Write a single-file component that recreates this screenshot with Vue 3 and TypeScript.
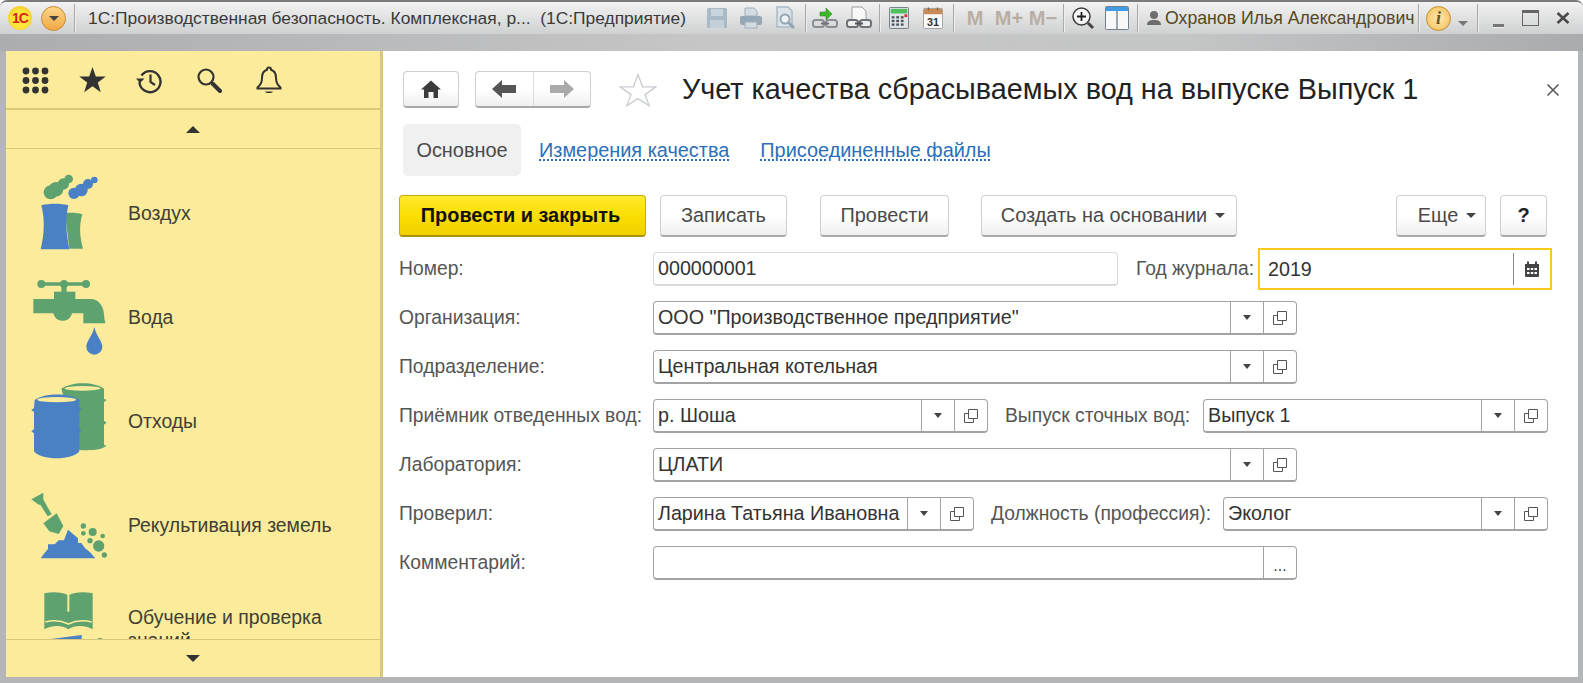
<script setup lang="ts">
// 1C document form: title bar, yellow section panel, and the form itself.
interface FieldDef {
  value: string
  width: number
  actions: 'select' | 'more'
}
interface RowDef {
  label: string
  field: FieldDef
  label2?: string
  field2?: FieldDef
}

const sections = [
  { icon: 'air', label: 'Воздух' },
  { icon: 'water', label: 'Вода' },
  { icon: 'waste', label: 'Отходы' },
  { icon: 'land', label: 'Рекультивация земель' },
  { icon: 'book', label: 'Обучение и проверка знаний' },
]

const rows: RowDef[] = [
  { label: 'Организация:', field: { value: 'ООО "Производственное предприятие"', width: 644, actions: 'select' } },
  { label: 'Подразделение:', field: { value: 'Центральная котельная', width: 644, actions: 'select' } },
  {
    label: 'Приёмник отведенных вод:',
    field: { value: 'р. Шоша', width: 335, actions: 'select' },
    label2: 'Выпуск сточных вод:',
    field2: { value: 'Выпуск 1', width: 345, actions: 'select' },
  },
  { label: 'Лаборатория:', field: { value: 'ЦЛАТИ', width: 644, actions: 'select' } },
  {
    label: 'Проверил:',
    field: { value: 'Ларина Татьяна Ивановна', width: 321, actions: 'select' },
    label2: 'Должность (профессия):',
    field2: { value: 'Эколог', width: 325, actions: 'select' },
  },
  { label: 'Комментарий:', field: { value: '', width: 644, actions: 'more' } },
]
</script>

<template>
  <div class="window">
    <header class="titlebar">
      <div class="strip">
        <span class="logo">1С</span>
        <button class="menu-round"><i class="tri"></i></button>
        <span class="sep first"></span>
        <span class="app-title">1С:Производственная безопасность. Комплексная, р...&nbsp; (1С:Предприятие)</span>

        <div class="tb-group first-group">
          <span class="slot">
            <svg viewBox="0 0 24 24" width="24" height="24"><path d="M2 3.5A1.5 1.5 0 0 1 3.500 2h17A1.500 1.500 0 0 1 22 3.500v17a1.500 1.500 0 0 1-1.500 1.500h-17A1.500 1.500 0 0 1 2 20.500z" fill="#a9bac7"/><rect x="6" y="3" width="12" height="7" fill="#c9d5dd"/><rect x="5" y="14" width="14" height="8" fill="#c3d0d9"/></svg>
          </span>
          <span class="slot">
            <svg viewBox="0 0 24 24" width="24" height="24"><path d="M6 2h9l3 3v5H6z" fill="#d3dbe1" stroke="#9fb0bd"/><rect x="1" y="10" width="22" height="9" rx="2" fill="#96a7b5"/><rect x="6" y="16" width="12" height="6" fill="#d3dbe1" stroke="#9fb0bd"/></svg>
          </span>
          <span class="slot">
            <svg viewBox="0 0 24 24" width="24" height="24"><path d="M4 1h11l4 4v16H4z" fill="#dde4e9" stroke="#a9bac7" stroke-width="1.500"/><circle cx="12" cy="13" r="4.500" fill="#eef2f5" stroke="#93a5b3" stroke-width="2"/><path d="M15.500 16.500 21 22" stroke="#93a5b3" stroke-width="3"/></svg>
          </span>
        </div>
        <span class="sep"></span>
        <div class="tb-group">
          <span class="slot">
            <svg viewBox="0 0 26 24" width="26" height="24"><path d="M8 6h6V2l6 6-6 6v-4H8z" fill="#3fb52e" stroke="#2d8a20" stroke-width=".6"/><rect x="1" y="14" width="11" height="7" rx="2.500" fill="none" stroke="#8b8f93" stroke-width="2"/><rect x="14" y="14" width="11" height="7" rx="2.500" fill="none" stroke="#8b8f93" stroke-width="2"/><path d="M9 17.500h8" stroke="#6f7377" stroke-width="2"/></svg>
          </span>
          <span class="slot">
            <svg viewBox="0 0 26 24" width="26" height="24"><path d="M6 1h10l4 4v10H6z" fill="#f8f8f8" stroke="#9a9da0"/><rect x="1" y="14" width="11" height="7" rx="2.500" fill="#eee" stroke="#6e7175" stroke-width="2"/><rect x="14" y="14" width="11" height="7" rx="2.500" fill="#eee" stroke="#6e7175" stroke-width="2"/><path d="M9 17.500h8" stroke="#55585c" stroke-width="2"/></svg>
          </span>
        </div>
        <span class="sep"></span>
        <div class="tb-group">
          <span class="slot">
            <svg viewBox="0 0 22 24" width="20" height="22"><rect x=".5" y=".5" width="21" height="23" rx="1" fill="#dfe3e6" stroke="#68737c"/><rect x="2" y="2" width="18" height="5" fill="#4cc05a"/><g fill="#4a5158"><rect x="3" y="10" width="3" height="2.500"/><rect x="8" y="10" width="3" height="2.500"/><rect x="13" y="10" width="3" height="2.500"/><rect x="3" y="14" width="3" height="2.500"/><rect x="8" y="14" width="3" height="2.500"/><rect x="13" y="14" width="3" height="2.500"/><rect x="3" y="18" width="3" height="2.500"/><rect x="8" y="18" width="3" height="2.500"/><rect x="13" y="18" width="3" height="2.500"/></g><rect x="17" y="8" width="3" height="3" fill="#e8232b"/></svg>
          </span>
          <span class="slot">
            <svg viewBox="0 0 22 24" width="20" height="22"><rect x=".5" y="1.500" width="21" height="22" rx="1" fill="#fafafa" stroke="#9a9a9a"/><path d="M1 2h20v6H1z" fill="#c98a55"/><path d="M6 .5v3M16 .5v3" stroke="#8d5b30" stroke-width="1.500"/><text x="11" y="21" text-anchor="middle" class="cal-num">31</text></svg>
          </span>
        </div>
        <span class="sep"></span>
        <div class="tb-group mem">
          <span class="slot">M</span>
          <span class="slot">M+</span>
          <span class="slot">M−</span>
        </div>
        <span class="sep"></span>
        <div class="tb-group">
          <span class="slot">
            <svg viewBox="0 0 24 24" width="24" height="24"><circle cx="10.500" cy="10.500" r="8.500" fill="#f5f5f5" stroke="#3c3c3c" stroke-width="1.500"/><path d="M6 10.500h9M10.500 6v9" stroke="#222" stroke-width="1.800"/><path d="M17 17l5 5" stroke="#444" stroke-width="3"/></svg>
          </span>
          <span class="slot">
            <svg viewBox="0 0 24 24" width="24" height="24"><rect x=".5" y=".5" width="23" height="23" rx="1" fill="#f8f8f8" stroke="#6f8090"/><path d="M1 1h22v4H1z" fill="#3e9be6"/><path d="M12 5v18" stroke="#7c8b98" stroke-width="1.500"/></svg>
          </span>
        </div>
        <span class="sep"></span>
        <svg class="user-icon" viewBox="0 0 16 16" width="16" height="16"><circle cx="8" cy="5" r="4" fill="#6d6d6d"/><path d="M1 15c0-4 3-5 7-5s7 1 7 5z" fill="#6d6d6d"/></svg>
        <span class="user-name">Охранов Илья Александрович</span>
        <span class="sep"></span>
        <span class="info">i</span>
        <i class="tri info-arrow"></i>
        <span class="sep"></span>
        <div class="win-btns">
          <span class="win-min"></span>
          <span class="win-max"></span>
          <svg class="win-close" viewBox="0 0 14 12" width="14" height="12"><path d="M1.500 1 12.500 11M12.500 1 1.500 11" stroke="#4a4a4a" stroke-width="2.600"/></svg>
        </div>
      </div>
      <div class="under-strip"></div>
    </header>

    <div class="body">
      <aside class="sidebar">
        <div class="side-tools">
          <svg viewBox="0 0 27 27" width="27" height="27" class="t-grid">
            <g fill="#333">
              <circle cx="4" cy="4" r="3.400"/><circle cx="13.500" cy="4" r="3.400"/><circle cx="23" cy="4" r="3.400"/>
              <circle cx="4" cy="13.500" r="3.400"/><circle cx="13.500" cy="13.500" r="3.400"/><circle cx="23" cy="13.500" r="3.400"/>
              <circle cx="4" cy="23" r="3.400"/><circle cx="13.500" cy="23" r="3.400"/><circle cx="23" cy="23" r="3.400"/>
            </g>
          </svg>
          <svg viewBox="0 0 27 26" width="27" height="26" class="t-star"><path d="M13.500 0l3.300 9.400h10l-8 6 3 9.800-8.300-5.900-8.300 5.900 3-9.800-8-6h10z" fill="#333"/></svg>
          <svg viewBox="0 0 27 27" width="27" height="27" class="t-hist"><path d="M5.500 8.500A10.500 10.500 0 1 1 3.500 15" fill="none" stroke="#333" stroke-width="2.400"/><path d="M0 11.500l4 4.500 4.500-4.500z" fill="#333"/><path d="M14.500 7.500v7.500l4.500 3" fill="none" stroke="#333" stroke-width="2.200"/></svg>
          <svg viewBox="0 0 26 25" width="26" height="25" class="t-search"><circle cx="9" cy="9" r="7.500" fill="none" stroke="#333" stroke-width="2.200"/><path d="M15.500 15.500l7.500 7.500" stroke="#333" stroke-width="4" stroke-linecap="round"/></svg>
          <svg viewBox="0 0 26 28" width="26" height="28" class="t-bell"><path d="M13 1.500c1.500 0 2 1 2 2.300 3.500 1 5 4.500 5 8.200 0 4 1.500 7 4.500 9.500v1H1.500v-1C4.500 19 6 16 6 12c0-3.700 1.500-7.200 5-8.200 0-1.300.500-2.300 2-2.300z" fill="none" stroke="#333" stroke-width="2"/><path d="M9 25.500c1 2 7 2 8 0z" fill="#333"/></svg>
        </div>
        <div class="scroll-btn"><i class="arrow up"></i></div>
        <div class="side-list">
          <div v-for="s in sections" :key="s.icon" class="side-item">
            <svg v-if="s.icon === 'air'" class="side-icon" viewBox="90 69 240 240">
              <g fill="#5ea36f"><circle cx="152" cy="127" r="21"/><circle cx="168" cy="118" r="22"/><circle cx="190" cy="102" r="17"/><circle cx="206" cy="87" r="13"/></g>
              <g fill="#4a80c4"><circle cx="222" cy="130" r="17"/><circle cx="244" cy="120" r="19"/><circle cx="264" cy="102" r="15"/><circle cx="283" cy="90" r="10"/></g>
              <path d="M195 190c18-3 38-1 52 3-10 34-8 66 2 103h-41z" fill="#5ea36f"/>
              <path d="M124 166c25-6 58-6 81 0-10 44-6 84 3 132h-86c11-46 13-88 2-132z" fill="#4a80c4"/>
            </svg>
            <svg v-else-if="s.icon === 'water'" class="side-icon" viewBox="90 381 240 240">
              <g fill="#5ea36f">
                <path d="M124 402h134" stroke="#5ea36f" stroke-width="11"/>
                <circle cx="124" cy="402" r="12"/><circle cx="192" cy="402" r="12"/><circle cx="258" cy="402" r="12"/>
                <rect x="184" y="402" width="16" height="28"/>
                <rect x="162" y="425" width="64" height="22"/>
                <path d="M100 447h170c28 0 43 22 43 58l3 15h-66v-30h-34c-6 30-50 30-56 0h-60z"/>
              </g>
              <path d="M283 530c-5 28-24 42-24 60a24 24 0 0 0 48 0c0-18-19-32-24-60z" fill="#4a80c4"/>
            </svg>
            <svg v-else-if="s.icon === 'waste'" class="side-icon" viewBox="90 693 240 240">
              <path d="M184 716c30-22 100-22 128 0v30l8 4-8 6v56l8 6-8 6v60l8 4-8 4c-10 8-40 10-74 8z" fill="#5ea36f"/>
              <ellipse cx="248" cy="715" rx="54" ry="7" fill="#fbeb9b"/>
              <path d="M104 750c30-22 106-22 134 0v22l6 6-6 6v52l6 6-6 6v56c-20 28-116 28-136 0v-54l-8-6 8-6v-52l-8-6 8-6z" fill="#4a80c4"/>
              <ellipse cx="170" cy="749" rx="58" ry="8" fill="#fbeb9b"/>
            </svg>
            <svg v-else-if="s.icon === 'land'" class="side-icon" viewBox="90 195 240 240">
              <g fill="#5ea36f">
                <path d="M94 238l36-20v34l-14 2z"/>
                <path d="M115 245l14-8 26 46-12 6z"/>
                <path d="M130 310l40-30 20 38-14 24-28-8z"/>
                <circle cx="250" cy="318" r="8"/><circle cx="278" cy="336" r="12"/><circle cx="250" cy="340" r="7"/><circle cx="308" cy="348" r="7"/><circle cx="270" cy="362" r="8"/><circle cx="296" cy="378" r="17"/><circle cx="313" cy="405" r="8"/>
              </g>
              <path d="M122 415c8-12 16-22 22-28v-14h20l12-12h16l12-32 30 26v14h10l10 14 16 14 16 18z" fill="#4a80c4"/>
            </svg>
            <svg v-else class="side-icon" viewBox="90 507 240 240">
              <path d="M133 520c28-6 55-3 69 5v50h6v-50c14-8 42-11 70-5v108c-26-13-52-13-73 0-21-13-46-13-72 0z" fill="#5ea36f"/>
              <path d="M136 606c22-6 48-4 69 6 21-10 47-12 70-6" fill="none" stroke="#fbeb9b" stroke-width="5"/>
              <path d="M130 660l115-15v30H130z" fill="#4a80c4"/>
              <circle cx="300" cy="668" r="14" fill="#5ea36f"/>
            </svg>
            <span class="side-label">{{ s.label }}</span>
          </div>
        </div>
        <div class="scroll-btn bottom"><i class="arrow down"></i></div>
      </aside>

      <main class="form">
        <div class="head">
          <button class="btn home">
            <svg viewBox="0 0 20 18" width="20" height="18"><path d="M10 .5 20 9.500h-3V18h-4.500v-6h-5v6H3V9.500H0z" fill="#3c3c3c"/></svg>
          </button>
          <div class="btn nav">
            <span class="nav-part">
              <svg viewBox="0 0 24 18" width="24" height="18"><path d="M0 9 10 0v5h14v8H10v5z" fill="#555"/></svg>
            </span>
            <span class="nav-part">
              <svg viewBox="0 0 24 18" width="24" height="18"><path d="M24 9 14 0v5H0v8h14v5z" fill="#aaa"/></svg>
            </span>
          </div>
          <svg class="fav" viewBox="0 0 38 34" width="38" height="34"><path d="M19 1.500l4.600 12.300h13.400L26 21.600l4.100 11-11.100-7-11.100 7 4.100-11L1 13.800h13.400z" fill="#fff" stroke="#c8ccd2" stroke-width="1.300"/></svg>
          <h1 class="title">Учет качества сбрасываемых вод на выпуске Выпуск 1</h1>
          <svg class="close" viewBox="0 0 14 14" width="14" height="14"><path d="M1.500 1.500l11 11M12.500 1.500l-11 11" stroke="#555" stroke-width="1.500"/></svg>
        </div>

        <nav class="tabs">
          <span class="tab active">Основное</span>
          <a class="tab link">Измерения качества</a>
          <a class="tab link second">Присоединенные файлы</a>
        </nav>

        <div class="commands">
          <button class="btn cmd primary">Провести и закрыть</button>
          <button class="btn cmd save">Записать</button>
          <button class="btn cmd post">Провести</button>
          <button class="btn cmd create">Создать на основании <i class="tri"></i></button>
          <button class="btn cmd more">Еще <i class="tri"></i></button>
          <button class="btn cmd help">?</button>
        </div>

        <div class="fields">
          <div class="row">
            <label class="lbl">Номер:</label>
            <div class="field plain">000000001</div>
            <label class="lbl2 year-lbl">Год журнала:</label>
            <div class="field focused">
              <span class="value">2019</span>
              <span class="cal-btn">
                <svg viewBox="0 0 16 16" width="16" height="16"><path d="M1 3h14v12a1 1 0 0 1-1 1H2a1 1 0 0 1-1-1z" fill="#444"/><path d="M4 .5v4M12 .5v4" stroke="#444" stroke-width="2"/><g fill="#fff"><rect x="3" y="7" width="2.500" height="2"/><rect x="6.800" y="7" width="2.500" height="2"/><rect x="10.500" y="7" width="2.500" height="2"/><rect x="3" y="11" width="2.500" height="2"/><rect x="6.800" y="11" width="2.500" height="2"/><rect x="10.500" y="11" width="2.500" height="2"/></g></svg>
              </span>
            </div>
          </div>

          <div v-for="r in rows" :key="r.label" class="row">
            <label class="lbl">{{ r.label }}</label>
            <div class="field" :style="{ width: r.field.width + 'px' }">
              <span class="value">{{ r.field.value }}</span>
              <template v-if="r.field.actions === 'select'">
                <span class="fbtn"><i class="tri small"></i></span>
                <span class="fbtn">
                  <svg viewBox="0 0 16 16" width="16" height="16"><path d="M5.500 1.500h9v9h-9z" fill="none" stroke="#555"/><path d="M5.500 5.500h-4v9h9v-4" fill="none" stroke="#555"/></svg>
                </span>
              </template>
              <span v-else class="fbtn dots">...</span>
            </div>
            <template v-if="r.field2">
              <label class="lbl2">{{ r.label2 }}</label>
              <div class="field" :style="{ width: r.field2.width + 'px' }">
                <span class="value">{{ r.field2.value }}</span>
                <span class="fbtn"><i class="tri small"></i></span>
                <span class="fbtn">
                  <svg viewBox="0 0 16 16" width="16" height="16"><path d="M5.500 1.500h9v9h-9z" fill="none" stroke="#555"/><path d="M5.500 5.500h-4v9h9v-4" fill="none" stroke="#555"/></svg>
                </span>
              </div>
            </template>
          </div>
        </div>
      </main>
    </div>
  </div>
</template>

<style>
html, body { margin: 0; padding: 0; overflow: hidden; background: #fff; }
</style>

<style scoped>
.window {
  width: 1583px;
  height: 683px;
  box-sizing: border-box;
  display: flex;
  flex-direction: column;
  padding: 0 5px 6px 6px;
  background: #b4b5b7;
  border-top: 2px solid #7b7b7b;
  border-radius: 7px 7px 0 0;
  font-family: "Liberation Sans", Arial, sans-serif;
  color: #444;
  overflow: hidden;
}
i { display: inline-block; font-style: normal; }
button { font-family: inherit; padding: 0; }

.titlebar { margin: 0 -5px 0 -6px; flex: none; }
.strip {
  height: 32px;
  display: flex;
  align-items: center;
  padding-left: 8px;
  background: linear-gradient(#f2f2f2, #cfd0d1);
}
.under-strip {
  height: 17px;
  background: linear-gradient(90deg, #abadb0 0, #c6c6c6 45%, #c4c5c5 75%, #a9abae 100%);
}
.logo {
  width: 24px;
  height: 24px;
  border-radius: 50%;
  background: radial-gradient(circle at 50% 55%, #ffe63d 45%, #f2b31c);
  color: #d2231c;
  font-weight: 700;
  font-size: 14px;
  line-height: 24px;
  text-align: center;
  letter-spacing: -1px;
}
.menu-round {
  width: 25px;
  height: 25px;
  margin-left: 9px;
  border: 1px solid #c98a32;
  border-radius: 50%;
  background: linear-gradient(#fbd58a, #f1a944);
  display: flex;
  align-items: center;
  justify-content: center;
}
.tri {
  width: 0;
  height: 0;
  border-left: 5px solid transparent;
  border-right: 5px solid transparent;
  border-top: 5px solid #444;
}
.tri.small { border-left-width: 4px; border-right-width: 4px; border-top-width: 5px; }
.sep {
  width: 1px;
  height: 28px;
  margin: 0 2px 0 3px;
  background: #a9a9a9;
  box-shadow: 1px 0 0 #eee;
  flex: none;
}
.sep.first { margin-left: 8px; margin-right: 13px; }
.app-title {
  width: 597px;
  font-size: 17.400px;
  white-space: nowrap;
  color: #3a3a3a;
}
.tb-group { display: flex; }
.first-group { margin-left: 15px; }
.slot {
  width: 34px;
  height: 28px;
  display: flex;
  align-items: center;
  justify-content: center;
}
.cal-num { font: 700 12px "Liberation Sans", Arial, sans-serif; fill: #333; }
.mem { color: #b9aea4; font-weight: 700; font-size: 20px; margin-left: 2px; }
.user-icon { margin-left: 6px; }
.user-name {
  margin-left: 3px;
  width: 250px;
  font-size: 17.700px;
  white-space: nowrap;
  color: #55491f;
}
.info {
  width: 23px;
  height: 23px;
  margin-left: 5px;
  border: 1px solid #c58f2a;
  border-radius: 50%;
  background: radial-gradient(circle, #fde9b0, #f2bd52);
  color: #6b5420;
  font: italic 700 18px/23px "Liberation Serif", serif;
  text-align: center;
}
.info-arrow {
  margin: 10px 6px 0 7px;
  border-top-color: #777;
}
.win-btns { display: flex; align-items: center; margin-left: 13px; }
.win-min { width: 11px; height: 3px; margin-top: 14px; background: #777; box-shadow: 0 1px 0 #eee; }
.win-max { width: 15px; height: 12px; margin-left: 18px; border: 1px solid #666; border-top-width: 3px; }
.win-close { margin-left: 17px; }

.body { flex: 1; display: flex; min-height: 0; }

.sidebar {
  width: 374px;
  flex: none;
  display: flex;
  flex-direction: column;
  background: #fbeb9b;
  border-right: 3px solid #d9c87d;
  box-sizing: content-box;
  color: #3f3f35;
}
.side-tools {
  height: 59px;
  flex: none;
  box-sizing: border-box;
  border-bottom: 2px solid #d8c77c;
  display: flex;
  align-items: center;
  padding: 1px 0 0 16px;
}
.t-star { margin-left: 30px; }
.t-hist { margin-left: 30px; }
.t-search { margin-left: 34px; }
.t-bell { margin-left: 33px; }
.scroll-btn {
  height: 38px;
  flex: none;
  display: flex;
  align-items: center;
  justify-content: center;
  border-bottom: 1px solid #d8c77c;
}
.scroll-btn.bottom {
  border-bottom: none;
  border-top: 1px solid #d8c77c;
  height: 37px;
}
.arrow { width: 0; height: 0; border-left: 7px solid transparent; border-right: 7px solid transparent; }
.arrow.up { border-bottom: 7px solid #333; }
.arrow.down { border-top: 7px solid #333; }
.side-list { flex: 1; overflow: hidden; padding-top: 12px; min-height: 0; }
.side-item {
  height: 104px;
  display: flex;
  align-items: center;
}
.side-icon { width: 80px; height: 80px; margin-left: 24px; flex: none; overflow: visible; }
.side-label {
  margin-left: 18px;
  width: 225px;
  font-size: 19.400px;
  line-height: 23px;
}

.form {
  flex: 1;
  min-width: 0;
  background: #fff;
  padding: 20px 30px 0 16px;
  display: flex;
  flex-direction: column;
}
.head { display: flex; align-items: center; height: 37px; padding-left: 4px; }
.btn {
  box-sizing: border-box;
  border: 1px solid #cfcfcf;
  border-bottom: 2px solid #a8a8a8;
  border-radius: 4px;
  background: linear-gradient(#fff, #fff 50%, #efefef);
  color: #4a4a4a;
  display: flex;
  align-items: center;
  justify-content: center;
}
.home { width: 56px; height: 37px; }
.nav { width: 116px; height: 37px; margin-left: 16px; }
.nav-part { flex: 1; height: 100%; display: flex; align-items: center; justify-content: center; }
.nav-part + .nav-part { border-left: 1px solid #dcdcdc; }
.fav { margin-left: 28px; }
.title {
  margin: 0 0 0 25px;
  font-size: 28.800px;
  font-weight: 400;
  color: #222;
  white-space: nowrap;
  flex: 1;
}
.close { margin-right: -12px; }

.tabs { display: flex; margin: 16px 0 0 4px; height: 52px; align-items: center; font-size: 19.900px; }
.tab { height: 52px; line-height: 52px; white-space: nowrap; }
.tab.active {
  width: 118px;
  box-sizing: border-box;
  text-align: center;
  background: #f0f0f0;
  border-radius: 5px;
  color: #4a4a4a;
}
.tab.link {
  margin-left: 18px;
  color: #2d6fb7;
  text-decoration: underline dotted #2d6fb7;
  text-underline-offset: 3px;
}
.tab.second { margin-left: 31px; }

.commands { display: flex; margin-top: 19px; height: 42px; }
.cmd { height: 42px; font-size: 19.900px; }
.primary {
  width: 247px;
  background: linear-gradient(#ffea2e, #fadd00 55%, #f0cf00);
  border: 1px solid #c9ad10;
  border-bottom: 2px solid #a8920c;
  color: #111;
  font-weight: 700;
  padding-right: 4px;
}
.save { width: 127px; margin-left: 14px; }
.post { width: 129px; margin-left: 33px; }
.create { width: 256px; margin-left: 32px; padding-left: 8px; }
.create .tri, .more .tri { margin-left: 8px; }
.more { width: 90px; margin-left: 159px; padding-left: 12px; }
.help { width: 47px; margin-left: 14px; font-weight: 700; color: #222; font-size: 20px; }

.fields { margin-top: 15px; display: flex; flex-direction: column; gap: 15px; font-size: 19.300px; }
.row { display: flex; align-items: center; height: 34px; }
.lbl { width: 254px; flex: none; color: #555; white-space: nowrap; }
.lbl2 { flex: 1; margin-left: 17px; color: #555; white-space: nowrap; }
.year-lbl { margin-left: 18px; }
.field {
  box-sizing: border-box;
  height: 34px;
  flex: none;
  display: flex;
  align-items: stretch;
  border: 1px solid #a3a3a3;
  border-bottom-width: 2px;
  border-radius: 4px;
  color: #333;
  font-size: 19.700px;
}
.field.plain {
  width: 465px;
  border: 1px solid #d8d8d8;
  border-bottom-width: 2px;
  align-items: center;
  padding-left: 4px;
}
.field.focused {
  width: 294px;
  height: 42px;
  margin-right: -4px;
  border: 2px solid #fdc81e;
  border-radius: 0;
  padding: 3px 0;
}
.focused .value { padding-left: 8px; }
.cal-btn {
  width: 36px;
  display: flex;
  align-items: center;
  justify-content: center;
  border-left: 1px solid #888;
}
.value {
  flex: 1;
  min-width: 0;
  padding-left: 4px;
  display: flex;
  align-items: center;
  white-space: nowrap;
  overflow: hidden;
}
.fbtn {
  width: 33px;
  box-sizing: border-box;
  flex: none;
  border-left: 1px solid #a3a3a3;
  display: flex;
  align-items: center;
  justify-content: center;
}
.dots { font-size: 16px; color: #444; padding-top: 6px; }
</style>
